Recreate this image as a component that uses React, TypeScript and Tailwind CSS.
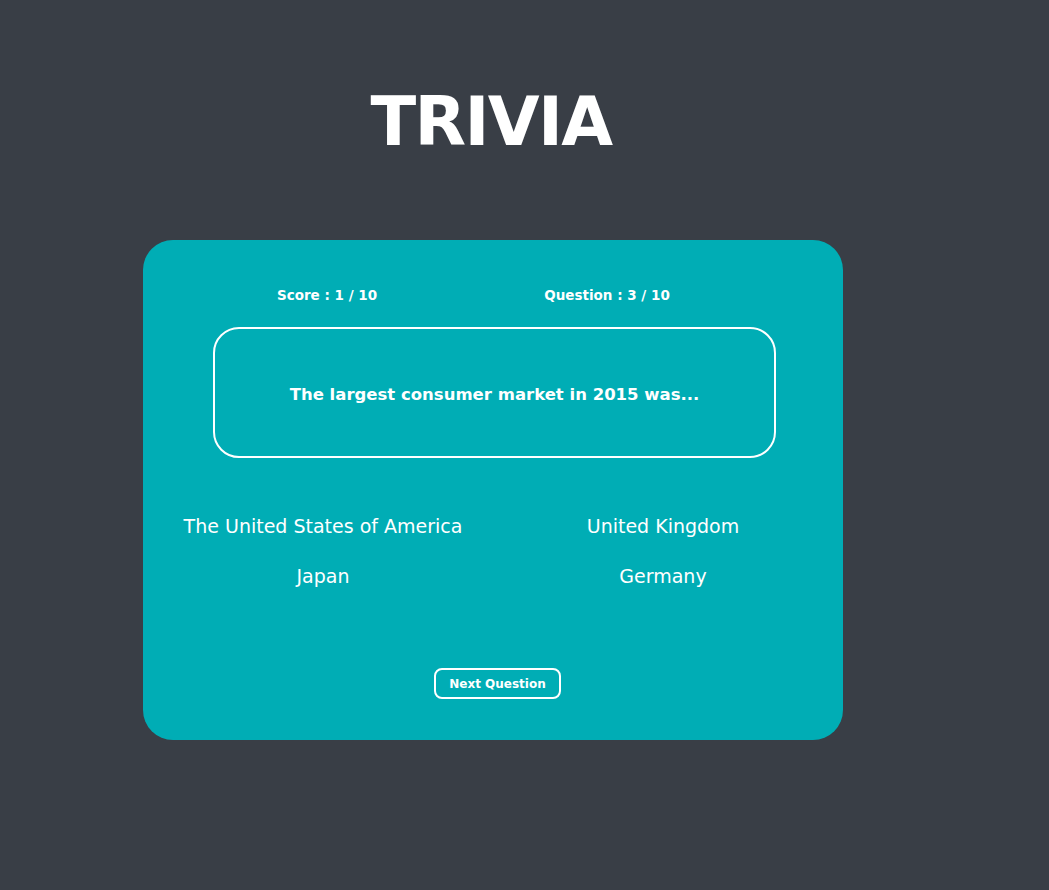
const font = { fontFamily: '"Comic Sans MS", "DejaVu Sans", sans-serif' };

const answers = ["The United States of America", "United Kingdom", "Japan", "Germany"];

export default function App() {
    return (
        <div className="min-h-screen w-full bg-[#393e46] text-white" style={font}>
            <div className="ml-[143px] w-[700px] pt-[86px]">
                {/* Title */}
                <h1 className="h-[72px] pr-[4px] text-center text-[67px] font-bold leading-[72px] tracking-tight">TRIVIA</h1>

                {/* Card */}
                <div className="mt-[82px] flex h-[500px] flex-col rounded-[30px] bg-[#00adb5] pt-[45px]">
                    <div className="flex pl-[84px] text-[13.5px] font-bold leading-5">
                        <div className="w-[200px] text-center">Score : 1 / 10</div>
                        <div className="ml-[80px] w-[200px] text-center">Question : 3 / 10</div>
                    </div>

                    <div className="ml-[70px] mt-[22px] flex h-[131px] w-[563px] items-center justify-center rounded-[26px] border-2 border-white pt-[6px]">
                        <p className="text-[16.5px] font-bold">The largest consumer market in 2015 was...</p>
                    </div>

                    <div className="mx-auto mt-[56px] grid w-[680px] grid-cols-2 gap-y-[26px] text-[19px] leading-6">
                        {answers.map((a) => (
                            <button key={a} className="text-center">
                                {a}
                            </button>
                        ))}
                    </div>

                    <button className="ml-[291px] mt-[80px] h-[31px] w-[127px] rounded-[8px] border-2 border-white text-[12px] font-bold">
                        Next Question
                    </button>
                </div>
            </div>
        </div>
    );
}
